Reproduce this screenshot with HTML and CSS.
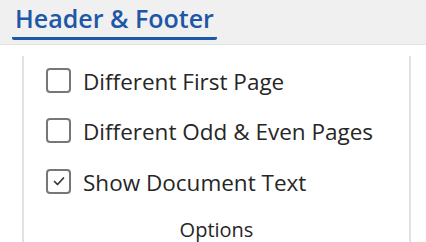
FILE: index.html
```html
<!DOCTYPE html>
<html lang="en">
<head>
    <meta charset="UTF-8">
    <title>Header &amp; Footer</title>
    <link rel="stylesheet" href="styles.css">
</head>
<body>
    <div class="tabbar">
        <span class="tab">Header &amp; Footer</span>
    </div>
    <div class="group">
        <label class="row">
            <span class="box"></span>
            <span class="label">Different First Page</span>
        </label>
        <label class="row">
            <span class="box"></span>
            <span class="label">Different Odd &amp; Even Pages</span>
        </label>
        <label class="row">
            <span class="box">
                <svg width="20" height="20" viewBox="0 0 20 20"><polyline points="5.5,10.5 8.5,13.5 14.5,7" fill="none" stroke="#333" stroke-width="1.7" stroke-linecap="round" stroke-linejoin="round"/></svg>
            </span>
            <span class="label">Show Document Text</span>
        </label>
        <div class="caption">Options</div>
    </div>
</body>
</html>
```

FILE: styles.css
```css
body { margin: 0; width: 426px; height: 242px; overflow: hidden; background: #fff; color: #262626; font-family: 'Open Sans', 'Noto Sans', sans-serif; }

/* 顶部标签栏 */
.tabbar { height: 45px; background: #f0f0f0; border-bottom: 1px solid #e3e3e3; padding-left: 12px; box-sizing: border-box; }
.tab {
    display: inline-block;
    font-size: 25px;
    font-weight: 600;
    color: #1d57a7;
    line-height: 37px;
    padding: 0 3px;
    border-bottom: 3px solid #1d57a7;
    border-radius: 0 0 2px 2px;
    height: 37px;
}

/* 选项组 */
.group {
    margin: 11px 15px 0 22px;
    height: 185px;
    border-left: 2px solid #e1e1e1;
    border-right: 2px solid #e1e1e1;
    padding: 3px 0 0 22px;
    display: flex;
    flex-direction: column;
    gap: 8.5px;
}
.row { display: flex; align-items: center; gap: 12px; height: 44px; font-size: 22.5px; }
.label { padding-top: 2px; }
.box {
    width: 25px; height: 25px;
    box-sizing: border-box;
    border: 2px solid #777;
    border-radius: 4px;
    display: flex; align-items: center; justify-content: center;
}
.caption { text-align: center; font-size: 20px; margin-top: 5px; padding-right: 22px; line-height: 28px; }
```
